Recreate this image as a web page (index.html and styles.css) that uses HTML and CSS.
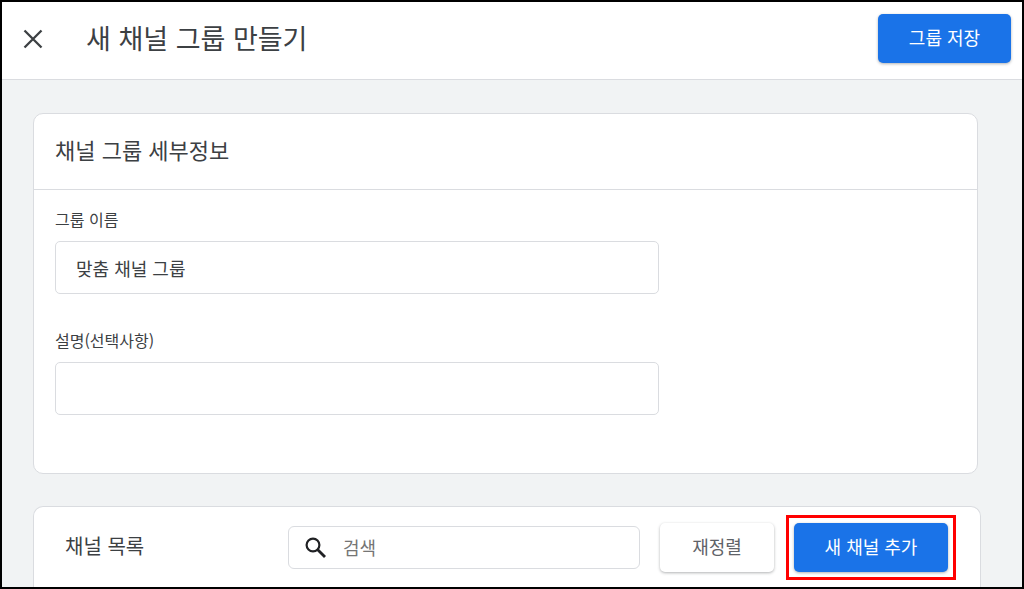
FILE: index.html
```html
<!DOCTYPE html>
<html lang="ko">

<head>
  <meta charset="UTF-8">
  <meta name="viewport" content="width=device-width, initial-scale=1.0">
  <title>새 채널 그룹 만들기</title>
  <link rel="stylesheet" href="styles.css">
</head>

<body>
  <div class="page">
    <header class="topbar">
      <button type="button" class="close-btn" aria-label="닫기">
        <svg width="20" height="20" viewBox="0 0 20 20" fill="none" stroke="#3c4043" stroke-width="2.3">
          <path d="M1.5 1.5L18.5 18.5M18.5 1.5L1.5 18.5" />
        </svg>
      </button>
      <h1>새 채널 그룹 만들기</h1>
      <button type="button" class="btn btn-primary btn-save">그룹 저장</button>
    </header>

    <main class="content">
      <section class="card details">
        <h2>채널 그룹 세부정보</h2>
        <form class="details-form">
          <div class="field">
            <label for="groupName">그룹 이름</label>
            <input type="text" id="groupName" value="맞춤 채널 그룹">
          </div>
          <div class="field">
            <label for="description">설명(선택사항)</label>
            <input type="text" id="description">
          </div>
        </form>
      </section>

      <section class="card channels">
        <h3>채널 목록</h3>
        <div class="search">
          <svg width="22" height="22" viewBox="0 0 22 22" fill="none" stroke="#202124">
            <circle cx="8" cy="8" r="6.4" stroke-width="2.2" />
            <path d="M12.5 12.5L20 20" stroke-width="2.8" />
          </svg>
          <input type="text" placeholder="검색" aria-label="검색">
        </div>
        <button type="button" class="btn btn-reorder">재정렬</button>
        <div class="highlight">
          <button type="button" class="btn btn-primary btn-add">새 채널 추가</button>
        </div>
      </section>
    </main>
  </div>
</body>

</html>
```

FILE: styles.css
```css
* {
  box-sizing: border-box;
}

body {
  margin: 0;
  font-family: "Noto Sans CJK KR", sans-serif;
  color: #3c4043;
}

.page {
  display: flex;
  flex-direction: column;
  height: 100vh;
  overflow: hidden;
  border: 2px solid #000;
  background-color: #f1f3f4;
}

.topbar {
  display: flex;
  flex-shrink: 0;
  align-items: center;
  padding: 12px 11px 16px 21px;
  background-color: #fff;
  border-bottom: 1px solid #dadce0;
}

h1,
h2,
h3 {
  margin: 0;
  font-weight: 400;
}

h1 {
  flex: 1;
  padding-bottom: 2px;
  font-size: 27px;
  line-height: 46px;
}

.close-btn {
  display: flex;
  margin-right: 43px;
  padding: 0;
  background: none;
  border: none;
  cursor: pointer;
}

.btn {
  height: 49px;
  padding: 0 0 3px;
  font-family: inherit;
  font-size: 18px;
  font-weight: 400;
  border: none;
  border-radius: 5px;
  box-shadow: 0 1px 3px rgba(60, 64, 67, 0.4);
  cursor: pointer;
}

.btn-primary {
  background-color: #1a73e8;
  color: #fff;
}

.btn-save {
  width: 133px;
}

.content {
  display: flex;
  flex: 1;
  flex-direction: column;
  gap: 32px;
  padding: 33px 41px 0 31px;
}

.card {
  flex-shrink: 0;
  background-color: #fff;
  border: 1px solid #dadce0;
  border-radius: 10px;
}

.details {
  margin-right: 3px;
}

h2 {
  padding: 18px 21px 22px;
  font-size: 22px;
  line-height: 35px;
  border-bottom: 1px solid #dadce0;
}

.details-form {
  display: flex;
  flex-direction: column;
  gap: 34px;
  padding: 17px 21px 58px;
}

.field {
  display: flex;
  flex-direction: column;
  gap: 10px;
  width: 67%;
}

.field label {
  font-size: 16px;
  line-height: 24px;
}

input {
  font-family: inherit;
  font-size: 18px;
  color: #3c4043;
}

.field input {
  height: 53px;
  padding: 0 20px;
  border: 1px solid #dadce0;
  border-radius: 5px;
}

.channels {
  display: flex;
  flex: 1 0 auto;
  align-items: flex-start;
  gap: 20px;
  padding: 16px 32px 16px 31px;
  border-bottom: none;
  border-radius: 10px 10px 0 0;
}

h3 {
  width: 203px;
  font-size: 20px;
  line-height: 46px;
}

.search {
  display: flex;
  flex: 1;
  align-items: center;
  gap: 16px;
  height: 43px;
  margin-top: 3px;
  padding: 0 16px;
  border: 1px solid #dadce0;
  border-radius: 6px;
}

.search input {
  flex: 1;
  min-width: 0;
  padding: 0 0 2px;
  border: none;
  outline: none;
}

.search input::placeholder {
  color: #757575;
}

.btn-reorder {
  width: 114px;
  background-color: #fff;
  color: #5f6368;
}

.highlight {
  position: relative;
}

.highlight::after {
  content: "";
  position: absolute;
  inset: -8px;
  border: 3px solid #f00;
  pointer-events: none;
}

.btn-add {
  display: block;
  width: 154px;
}
```
